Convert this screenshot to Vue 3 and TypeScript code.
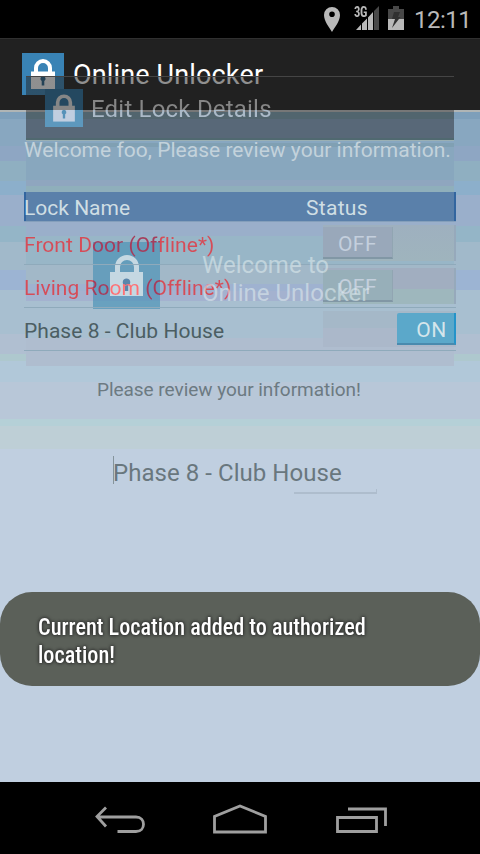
<script setup lang="ts">
interface Lock { name: string; online: boolean }
const locks: Lock[] = [
  { name: 'Front Door (Offline*)', online: false },
  { name: 'Living Room (Offline*)', online: false },
  { name: 'Phase 8 - Club House', online: true },
]
</script>

<template>
  <div class="screen">
    <header class="status">
      <svg class="pin" viewBox="0 0 16 25"><path fill-rule="evenodd" d="M8 0A8 8 0 0 0 0 8C0 14 5 20 8 25C11 20 16 14 16 8A8 8 0 0 0 8 0ZM8 4.5A2.8 2.8 0 1 1 8 10.1A2.8 2.8 0 0 1 8 4.5Z" /></svg>
      <div class="network">
        <svg viewBox="0 0 25 24"><path class="dim" d="M19 5L24 0V24H19Z" /><path d="M1 24L6 18.5V24ZM7 17.500L12 12.500V24H7ZM13 11.500L18 6V24H13Z" /></svg>
        <span>3G</span>
      </div>
      <svg class="battery" viewBox="0 0 16 24"><path class="dim" d="M0 3H5V0H11V3H16V24H0Z" /><path d="M0 13H16V24H0Z" /><path class="bolt" d="M6 6H12L10 11H12.5L4 22L7 13H4Z" /></svg>
      <span class="clock">12:11</span>
    </header>
    <div class="actionbar">
      <svg class="logo" viewBox="0 0 42 42"><rect width="42" height="42" fill="#3983b5" /><path d="M14 21V15A7 7 0 0 1 28 15V21" fill="none" stroke="#fff" stroke-width="4" /><path d="M9 18.500H33V36H9Z" fill="#fff" /><path d="M21 23A2.700 2.700 0 0 1 22.300 28V32.500H19.700V28A2.700 2.700 0 0 1 21 23Z" fill="#28648c" /></svg>
      <h1>Online Unlocker</h1>
    </div>
    <main class="content">
      <div class="bands"></div>
      <div class="sheet">
        <svg class="ghost-lock" viewBox="0 0 67 67"><rect width="67" height="67" fill="#3d8bb4" opacity=".58" /><path d="M24.500 31V25A9.500 9.500 0 0 1 43.500 25V31" fill="none" stroke="#c5d8e2" stroke-width="5" /><path d="M17 30H50V54H17Z" fill="#c5d8e2" /><path d="M33.500 36.500A3.700 3.700 0 0 1 35.200 43.500V49H31.800V43.500A3.700 3.700 0 0 1 33.500 36.500Z" fill="#5a86ab" /></svg>
      </div>
      <section class="page">
        <p class="welcome">Welcome foo, Please review your information.</p>
        <div class="table-head"><span>Lock Name</span><span class="status-label">Status</span></div>
        <div v-for="lock in locks" :key="lock.name" class="lock-row">
          <span class="lock-name" :class="{ offline: !lock.online }">{{ lock.name }}</span>
          <div class="track" :class="{ on: lock.online }"><span class="thumb">{{ lock.online ? 'ON' : 'OFF' }}</span></div>
        </div>
        <p class="review">Please review your information!</p>
        <div class="field"><i class="caret"></i><span>Phase 8 - Club House</span></div>
        <div class="underline"></div>
      </section>
    </main>
    <footer class="nav">
      <svg viewBox="0 0 480 72"><g fill="none" stroke="#9f9f9f" stroke-width="2.8"><path d="M106 25.5L97 34.5L106 44.5M97 35H136C146 35 146 49.5 136 49.5H117.500" /><path d="M214.500 50V34.500L240 24L265.500 34.500V50Z" /><path d="M337.500 35.500H376.500V49.500H337.500ZM348 27H385.500V44" /></g></svg>
    </footer>

    <div class="ghost">
      <div class="ghost-bar">
        <svg class="ghost-logo" viewBox="0 0 42 42"><defs><linearGradient id="gb" x2="0" y2="1"><stop offset=".56" stop-color="#244860" /><stop offset=".56" stop-color="#5d98bd" /></linearGradient><linearGradient id="gw" gradientUnits="userSpaceOnUse" x1="0" y1="0" x2="0" y2="42"><stop offset=".56" stop-color="#868686" /><stop offset=".56" stop-color="#c0cee0" /></linearGradient></defs><rect width="42" height="42" fill="url(#gb)" /><path d="M14 21V15A7 7 0 0 1 28 15V21" fill="none" stroke="url(#gw)" stroke-width="4" /><path d="M9 18.500H33V36H9Z" fill="url(#gw)" /><path d="M21 23A2.700 2.700 0 0 1 22.300 28V32.500H19.700V28A2.700 2.700 0 0 1 21 23Z" fill="#5692b9" /></svg>
        <span class="ghost-title">Edit Lock Details</span>
      </div>
      <div class="ghost-welcome">Welcome to<br>Online Unlocker</div>
    </div>
    <div class="toast"><p>Current Location added to authorized<br>location!</p></div>
  </div>
</template>

<style>
body { margin: 0; background: #000; }
</style>
<style scoped>
.screen { position: relative; width: 480px; height: 854px; overflow: hidden; display: flex; flex-direction: column; background: #000; font-family: Roboto, "Liberation Sans", sans-serif; color: #fff; }
p, h1 { margin: 0; font-weight: 400; white-space: nowrap; }
span { white-space: nowrap; }
svg { display: block; flex: none; }
.status { height: 38px; box-sizing: border-box; display: flex; justify-content: flex-end; align-items: flex-start; padding: 6px 9px 0 0; fill: #b9b9b9; color: #b9b9b9; }
.pin { width: 16px; height: 25px; margin: 1px 15px 0 0; }
.network { position: relative; width: 25px; height: 24px; margin-right: 8px; }
.network svg { width: 25px; height: 24px; }
.network span { position: absolute; left: -1px; top: 0; height: 12px; font: 700 14px/13px "Roboto Condensed", Roboto, sans-serif; letter-spacing: -.3px; background: #000; color: #b9b9b9; transform: scaleX(.9); transform-origin: left; }
.dim { fill: #484848; } .bolt { fill: #303030; }
.battery { width: 16px; height: 24px; margin-right: 10px; }
.clock { width: 57px; font-size: 24px; line-height: 28px; letter-spacing: -.5px; }
.actionbar { height: 72px; display: flex; align-items: center; gap: 9px; padding-left: 22px; background: #212121; border-top: 1px solid #303030; box-sizing: border-box; }
.logo { width: 42px; height: 42px; margin-top: -1px; }
h1 { font-size: 27px; line-height: 32px; letter-spacing: .15px; }
.content { position: relative; height: 672px; }
.bands { position: absolute; inset: 0; background: linear-gradient(#b0b5b5 0 2px, #7e9fba 2px 9px, #88a7c0 9px 36px, #8ea6c3 36px 51px, #8fafc1 51px 71px, #8cafcb 71px 85px, #9aafcb 85px 116px, #94b5c7 116px 132px, #a1b9ca 132px 160px, #9cb4d3 160px 180px, #a8bfd0 180px 224px, #b0bfd1 224px 244px, #aec8ce 244px 251px, #b1c8d9 251px 272px, #b8c7d8 272px 309px, #b5d0d7 309px 316px, #becfd6 316px 339px, #c0cfe0 339px); }
.sheet { position: absolute; left: 26px; top: 33px; width: 428px; height: 223px; background: linear-gradient(#80a0b3 0 4px, #88a7be 4px 37px, #8fa6bf 37px 43px, #8fafbb 43px 78px, #9aafca 78px 93px, #98b6c7 93px 121px, #a2b8c8 121px 141px, #9fb2d0 141px 148px, #a4b2cf 148px 158px, #a8bfd0 158px 195px, #afbdcf 195px); }
.page { position: relative; padding: 27px 24px 0; }
.welcome { font-size: 21px; line-height: 26px; color: #c3d2db; letter-spacing: .02px; }
.table-head { height: 29px; margin-top: 29px; box-sizing: border-box; border-left: 2px solid #32659f; border-right: 2px solid #32659f; background: #5a80aa; display: grid; grid-template-columns: 280px 1fr; font-size: 21px; line-height: 32px; color: #cfdee4; box-shadow: 0 1px #849fbb; }
.table-head span:first-child { margin-left: -2px; }
.status-label { letter-spacing: .3px; }
.lock-row { height: 43px; box-sizing: border-box; border-bottom: 1px solid #8faabb; display: flex; justify-content: space-between; align-items: center; }
.lock-row:nth-of-type(2) { height: 44px; }
.lock-name { font-size: 21px; line-height: 26px; letter-spacing: .04px; padding-top: 4px; color: #4c5e63; }
.lock-name.offline { color: transparent; background: linear-gradient(90deg, #d64c58 69px, #a63c5c 69px 136px, #d64c58 136px); background-clip: text; }
.lock-row:nth-of-type(3) .lock-name { background: linear-gradient(90deg, #d64c58 69px, #a63c5c 69px 86px, #ff7074 86px 119px, #a63c5c 119px 136px, #d64c58 136px); background-clip: text; }
.track { width: 133px; height: 36px; box-sizing: border-box; display: flex; align-items: center; background: linear-gradient(#9eb0bf, #9fb4bd); border-right: 2px solid #96a9bb; }
.lock-row:nth-of-type(3) .track { background: linear-gradient(#a1aec0 0 58%, #9eb7bd 58%); }
.thumb { width: 70px; height: 32px; box-sizing: border-box; border-bottom: 2px solid #8197a5; border-right: 1px solid #91a5b2; text-align: center; font-size: 21px; line-height: 35px; letter-spacing: .5px; color: #c4cfdd; background: #99a8ba; }
.lock-row:nth-of-type(3) .thumb { background: #97afb9; }
.track.on { justify-content: flex-end; background: linear-gradient(#a5b8c8 0 46%, #abb8ca 46%); border: 0; }
.track.on .thumb { width: 59px; padding-left: 12px; color: #d4e5eb; background: #5ba8ca; border-right: 2px solid #2493c9; border-bottom-color: #498aae; border-radius: 2px 0 0 0; }
.review { margin: 27px 0 0 73px; font-size: 19px; line-height: 24px; letter-spacing: -.04px; color: #6c7a82; }
.field { display: flex; margin: 54px 0 0 89px; color: #69777e; font-size: 24px; line-height: 35px; height: 34px; letter-spacing: .05px; }
.caret { width: 1px; height: 28px; background: #85949c; margin-right: -1px; }
.underline { width: 83px; height: 5px; margin: -1px 0 0 270px; border-bottom: 2px solid #aebdcd; border-right: 1px solid #aebdcd; box-sizing: border-box; }
.nav { height: 72px; } .nav svg { width: 480px; height: 72px; }
.ghost { position: absolute; left: 26px; top: 76px; width: 428px; height: 290px; pointer-events: none; }
.ghost-bar { height: 64px; position: relative; background: linear-gradient(#454545 0 1px, #21212180 1px 34px, #777 34px 36px, #52656e 36px 43px, #586878 43px 62px, #506970 62px); border-bottom: 1px solid #9ab0b4; }
.ghost-logo { position: absolute; left: 19px; top: 13px; width: 38px; height: 38px; }
.ghost-title { position: absolute; left: 65px; top: 19px; font-size: 24px; line-height: 28px; letter-spacing: .2px; color: transparent; background: linear-gradient(#858585 0 15px, #abbac8 15px); background-clip: text; }
.ghost-lock { position: absolute; left: 67px; top: 99px; width: 67px; height: 67px; }
.ghost-welcome { position: absolute; left: 176px; top: 175px; font-size: 24px; line-height: 28px; letter-spacing: .02px; color: #dce9ec99; white-space: nowrap; }
.toast { position: absolute; left: 0; top: 592px; width: 480px; height: 94px; box-sizing: border-box; padding: 21px 38px; border-radius: 32px; background: #5b6059; }
.toast p { font-family: "Roboto Condensed", Roboto, sans-serif; font-weight: 500; font-size: 24px; line-height: 28px; width: max-content; transform-origin: left; transform: scaleX(.925); text-shadow: 0 0 4px #222, 0 0 3px #333; }
</style>
